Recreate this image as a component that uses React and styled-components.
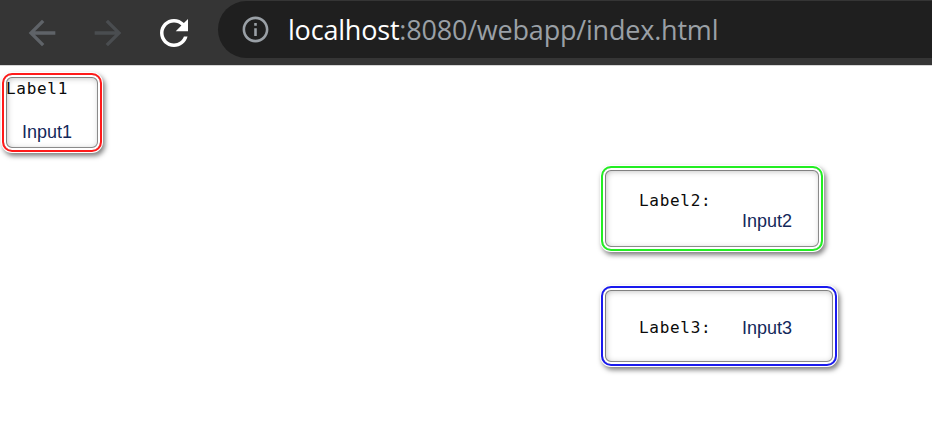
import React from 'react';
import styled, { createGlobalStyle } from 'styled-components';

const GlobalStyle = createGlobalStyle`
  html, body {
    margin: 0;
    padding: 0;
    background: #ffffff;
  }
  body {
    width: 932px;
    height: 429px;
    overflow: hidden;
  }
`;

// browser chrome
const Toolbar = styled.div`
  height: 66px;
  background: #353535;
  border-bottom: 1px solid #d6d6d6;
  display: flex;
  align-items: center;
  padding-left: 22px;
  box-sizing: border-box;
`;

const NavButton = styled.div`
  width: 40px;
  height: 40px;
  margin-right: 26px;
  display: flex;
  align-items: center;
  justify-content: center;
  color: ${props => props.$tint};
  svg {
    flex: none;
  }
`;

const AddressBar = styled.div`
  flex: 1;
  height: 57px;
  margin-left: -2px;
  margin-top: -6px;
  background: #1f1f1f;
  border-radius: 29px 0 0 29px;
  display: flex;
  align-items: center;
  padding-left: 22px;
  gap: 17px;
`;

const Url = styled.div`
  font-family: "Open Sans", "Noto Sans", sans-serif;
  font-size: 27px;
  color: #9aa0a6;
  letter-spacing: -0.2px;
  white-space: nowrap;
  margin-top: -1px;
  span {
    color: #ffffff;
  }
`;

// page
const Page = styled.div`
  display: flex;
  align-items: flex-start;
  padding: 7px 2px;
`;

const RightColumn = styled.div`
  display: flex;
  flex-direction: column;
  gap: 35px;
  margin-left: 499px;
  margin-top: 93px;
`;

const Box = styled.div`
  box-sizing: border-box;
  width: ${props => props.$w}px;
  height: ${props => props.$h}px;
  border: 2px solid ${props => props.$ring};
  border-radius: 10px;
  background: #ffffff;
  box-shadow:
    0 0 0 1px #ffffff,
    2px 3px 5px 1px rgba(0, 0, 0, 0.5),
    inset 0 0 0 2px #ffffff,
    inset 0 0 0 3px rgba(0, 0, 0, 0.4),
    inset 1px 1px 6px 2px rgba(0, 0, 0, 0.28);
  display: flex;
`;

const StackBox = styled(Box)`
  flex-direction: column;
  padding: 4px 2px;
`;

const PairBox = styled(Box)`
  align-items: ${props => props.$items};
  padding: ${props => props.$pad};
  padding-left: 36px;
`;

const Label = styled.div`
  font-family: "DejaVu Sans Mono", "Liberation Mono", monospace;
  font-size: 16px;
  letter-spacing: 0.7px;
  line-height: 20px;
  color: #0a0a0a;
  flex: none;
  width: ${props => (props.$cell ? '103px' : 'auto')};
  align-self: ${props => props.$self || 'auto'};
`;

const Input = styled.div`
  font-family: "Liberation Sans", Arial, sans-serif;
  font-size: 18px;
  line-height: 22px;
  color: #13285a;
  padding-left: ${props => props.$indent || 0}px;
  margin-top: ${props => props.$top || 0}px;
  align-self: ${props => props.$self || 'auto'};
`;

const ArrowIcon = ({ flip }) => (
  <svg width="40" height="40" viewBox="0 0 24 24" fill="currentColor"
    style={flip ? { transform: 'scaleX(-1)' } : undefined}>
    <path d="M20 11H7.83l5.59-5.59L12 4l-8 8 8 8 1.41-1.41L7.83 13H20v-2z" />
  </svg>
);

const ReloadIcon = () => (
  <svg width="42" height="42" viewBox="0 0 24 24" fill="currentColor">
    <path d="M17.65 6.35C16.2 4.9 14.21 4 12 4c-4.42 0-7.99 3.58-7.99 8s3.57 8 7.99 8c3.73 0 6.84-2.55 7.73-6h-2.08c-.82 2.33-3.04 4-5.65 4-3.31 0-6-2.69-6-6s2.69-6 6-6c1.66 0 3.14.69 4.22 1.78L13 11h7V4l-2.35 2.35z" />
  </svg>
);

const InfoIcon = () => (
  <svg width="31" height="31" viewBox="0 0 24 24" fill="#9aa0a6">
    <path d="M11 7h2v2h-2zm0 4h2v6h-2zm1-9C6.48 2 2 6.48 2 12s4.48 10 10 10 10-4.48 10-10S17.52 2 12 2zm0 18c-4.41 0-8-3.59-8-8s3.59-8 8-8 8 3.59 8 8-3.59 8-8 8z" />
  </svg>
);

const App = () => {
  return (
    <>
      <GlobalStyle />
      <Toolbar>
        <NavButton $tint="#5f6368"><ArrowIcon /></NavButton>
        <NavButton $tint="#4a4d50"><ArrowIcon flip /></NavButton>
        <NavButton $tint="#ffffff"><ReloadIcon /></NavButton>
        <AddressBar>
          <InfoIcon />
          <Url><span>localhost</span>:8080/webapp/index.html</Url>
        </AddressBar>
      </Toolbar>
      <Page>
        <StackBox $w={100} $h={79} $ring="#ff1a1a">
          <Label>Label1</Label>
          <Input $indent={16} $top={22}>Input1</Input>
        </StackBox>
        <RightColumn>
          <PairBox $w={222} $h={85} $ring="#22ee22" $items="stretch" $pad="23px 0 17px">
            <Label $cell $self="flex-start">Label2:</Label>
            <Input $self="flex-end">Input2</Input>
          </PairBox>
          <PairBox $w={236} $h={80} $ring="#1a1aee" $items="center" $pad="4px 0 0">
            <Label $cell>Label3:</Label>
            <Input>Input3</Input>
          </PairBox>
        </RightColumn>
      </Page>
    </>
  );
};

export default App;
